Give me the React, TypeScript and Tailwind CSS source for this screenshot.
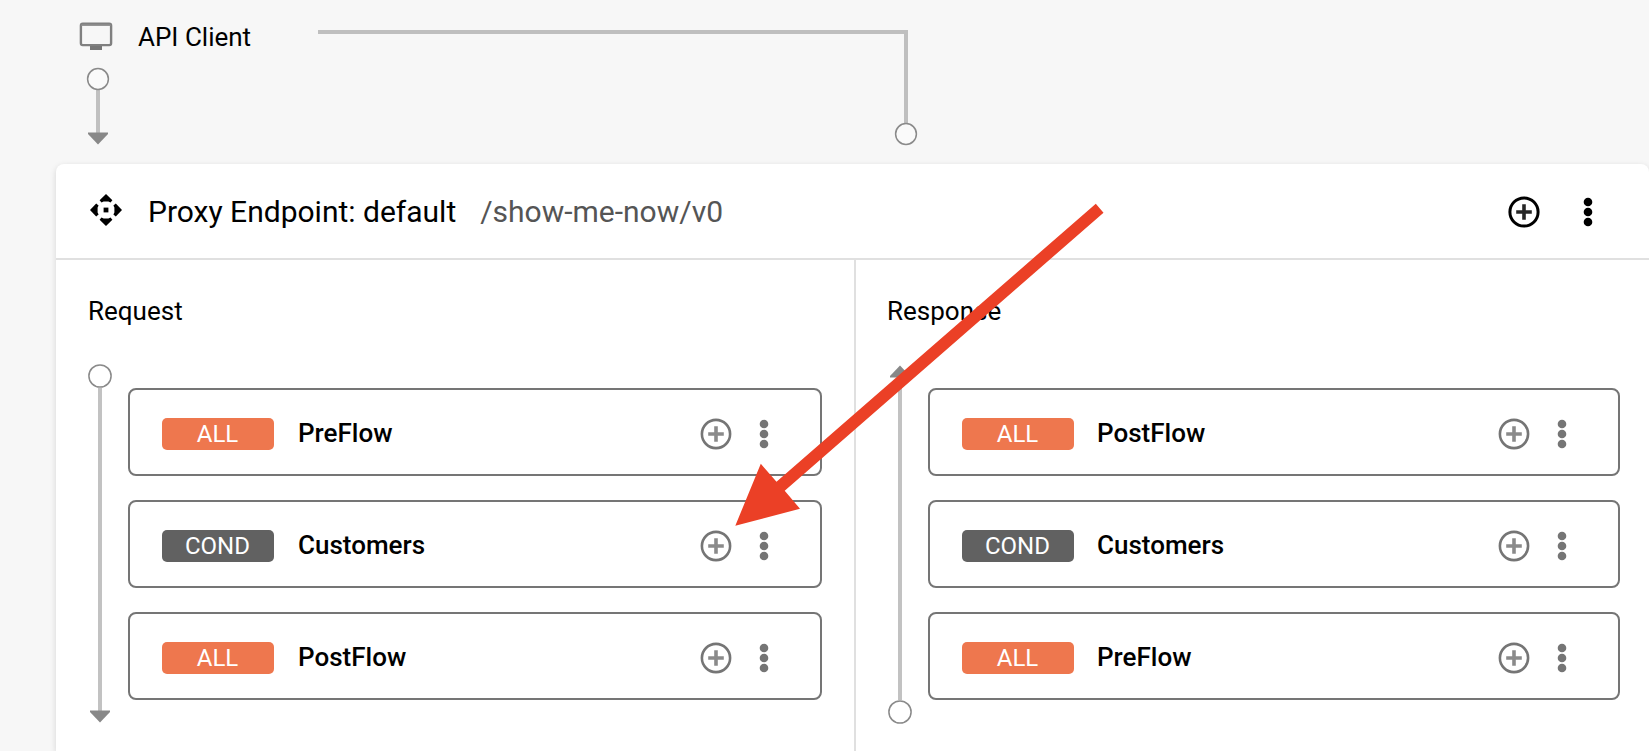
type Flow = { kind: "ALL" | "COND"; name: string };

const requestFlows: Flow[] = [
  { kind: "ALL", name: "PreFlow" },
  { kind: "COND", name: "Customers" },
  { kind: "ALL", name: "PostFlow" },
];

const responseFlows: Flow[] = [
  { kind: "ALL", name: "PostFlow" },
  { kind: "COND", name: "Customers" },
  { kind: "ALL", name: "PreFlow" },
];

function AddIcon({ heavy = false }: { heavy?: boolean }) {
  return (
    <svg className="h-8 w-8 shrink-0" viewBox="0 0 32 32" fill="none" stroke="currentColor">
      <circle cx="16" cy="16" r="14.1" strokeWidth={heavy ? 3 : 2.6} />
      <path d="M16 8.2V23.8M8.2 16H23.8" strokeWidth="3.6" opacity="0.85" />
    </svg>
  );
}

function MoreIcon() {
  return (
    <svg className="h-8 w-2 shrink-0 overflow-visible" viewBox="0 0 8 32" fill="currentColor">
      <circle cx="4" cy="6" r="4.3" />
      <circle cx="4" cy="16" r="4.3" />
      <circle cx="4" cy="26" r="4.3" />
    </svg>
  );
}

function FlowRow({ flow, nameGap }: { flow: Flow; nameGap: string }) {
  return (
    <div className="flex h-[88px] items-center rounded-lg border-2 border-[#757575] bg-white pt-1 pr-[52px] pl-8">
      <span
        className={`flex h-8 w-28 items-center justify-center rounded-[5px] pr-px text-2xl text-white ${
          flow.kind === "ALL" ? "bg-[#ee774e]" : "bg-[#616161]"
        }`}
      >
        {flow.kind}
      </span>
      <span className={`${nameGap} -mt-0.5 text-[26px] leading-8 font-medium text-black`}>{flow.name}</span>
      <span className="ml-auto flex items-center gap-7 text-[#757575]">
        <AddIcon />
        <MoreIcon />
      </span>
    </div>
  );
}

function DownRail() {
  return (
    <svg className="h-[360px] w-6 shrink-0" viewBox="0 0 24 360">
      <path d="M10 24h4v323h-4z" fill="#c2c2c2" />
      <circle cx="12" cy="12" r="11.1" fill="#fff" stroke="#8a8a8a" strokeWidth="1.5" />
      <path d="M2 346.500H22V348L12 358.500 2 348z" fill="#888" />
    </svg>
  );
}

function UpRail() {
  return (
    <svg className="h-[360px] w-6 shrink-0" viewBox="0 0 24 360">
      <path d="M10 13h4v323h-4z" fill="#c2c2c2" />
      <circle cx="12" cy="348" r="11.1" fill="#fff" stroke="#8a8a8a" strokeWidth="1.5" />
      <path d="M2 13.500H22V12L12 1.500 2 12z" fill="#888" />
    </svg>
  );
}

export default function App() {
  return (
    <div className="relative flex h-[751px] w-[1649px] flex-col overflow-hidden bg-[#f7f7f7] font-['Roboto',sans-serif] text-black">
      <header className="flex h-[164px] shrink-0 pl-[79px]">
        <div className="flex w-[239px] flex-col">
          <div className="flex h-[66px] items-center pt-1.5">
            <svg className="h-7 w-[34px]" viewBox="0 0 34 28">
              <rect x="1.900" y="1.700" width="30.200" height="21.400" rx="1.800" fill="none" stroke="#808080" strokeWidth="2.400" />
              <path d="M2.500 2.500h29v1.500h-29z" fill="#959595" />
              <path d="M11 24h12v4H11z" fill="#777" />
            </svg>
            <span className="mt-0.5 ml-[25px] text-[26px] leading-8 whitespace-nowrap">API Client</span>
          </div>
          <svg className="ml-[7px] h-20 w-6" viewBox="0 0 24 80">
            <path d="M10 23h4v44h-4z" fill="#c0c0c0" />
            <circle cx="12" cy="13" r="10.400" fill="#fafafa" stroke="#8a8a8a" strokeWidth="1.500" />
            <path d="M2 66.500H22V68L12 78.500 2 68z" fill="#888" />
          </svg>
        </div>
        <svg className="h-[164px] w-[602px]" viewBox="0 0 602 164">
          <path d="M0 32H588V124" fill="none" stroke="#bfbfbf" strokeWidth="4" />
          <circle cx="588" cy="134" r="10.400" fill="#fafafa" stroke="#8a8a8a" strokeWidth="1.500" />
        </svg>
      </header>

      <main className="ml-14 flex flex-1 flex-col rounded-t-lg bg-white shadow-[0_2px_6px_rgba(0,0,0,0.14)]">
        <div className="flex h-24 shrink-0 items-center border-b-2 border-[#e0e0e0] pt-0.5 pr-[57px] pl-[33px]">
          <svg className="-mt-1 h-[34px] w-[34px]" viewBox="-17 -17 34 34">
            <path d="M0 -16L6.400 -9.800 4.500 -7.400 2.400 -8.400H-2.400L-4.500 -7.400 -6.400 -9.800z" />
            <path d="M16 0L9.800 6.400 7.400 4.500 8.400 2.400V-2.400L7.400 -4.500 9.800 -6.400z" />
            <path d="M0 16L-6.400 9.800 -4.500 7.400 -2.400 8.400H2.400L4.500 7.400 6.400 9.800z" />
            <path d="M-16 0L-9.800 -6.400 -7.400 -4.500 -8.400 -2.400V2.400L-7.400 4.500 -9.800 6.400z" />
            <path d="M-2.400 -2.400H2.400V2.400H-2.400z" />
          </svg>
          <h1 className="ml-[25px] text-[30px] leading-9 whitespace-nowrap">Proxy Endpoint: default</h1>
          <span className="ml-6 text-[30px] leading-9 text-[#555]">/show-me-now/v0</span>
          <span className="ml-auto flex items-center gap-11">
            <AddIcon heavy />
            <MoreIcon />
          </span>
        </div>

        <div className="flex flex-1">
          <section className="w-[800px] shrink-0 border-r-2 border-[#e0e0e0] pt-9 pl-8">
            <h2 className="h-17 text-[26px] leading-[30px]">Request</h2>
            <div className="flex gap-4">
              <DownRail />
              <div className="flex w-[694px] flex-col gap-6 pt-6">
                {requestFlows.map((flow) => (
                  <FlowRow key={flow.name} flow={flow} nameGap="ml-6" />
                ))}
              </div>
            </div>
          </section>
          <section className="flex-1 pt-9 pl-8">
            <h2 className="-ml-px h-17 text-[26px] leading-[30px]">Response</h2>
            <div className="flex gap-4">
              <UpRail />
              <div className="flex w-[692px] flex-col gap-6 pt-6">
                {responseFlows.map((flow) => (
                  <FlowRow key={flow.name} flow={flow} nameGap="ml-[23px]" />
                ))}
              </div>
            </div>
          </section>
        </div>
      </main>

      <svg className="pointer-events-none absolute inset-0 h-[751px] w-[1649px]" viewBox="0 0 1649 751">
        <path d="M735.300 525.700L760.800 463.800 776.500 481.800 1095.800 203.700 1103.500 212.700 784.700 490.700 800 508.700z" fill="#eb4026" />
      </svg>
    </div>
  );
}
